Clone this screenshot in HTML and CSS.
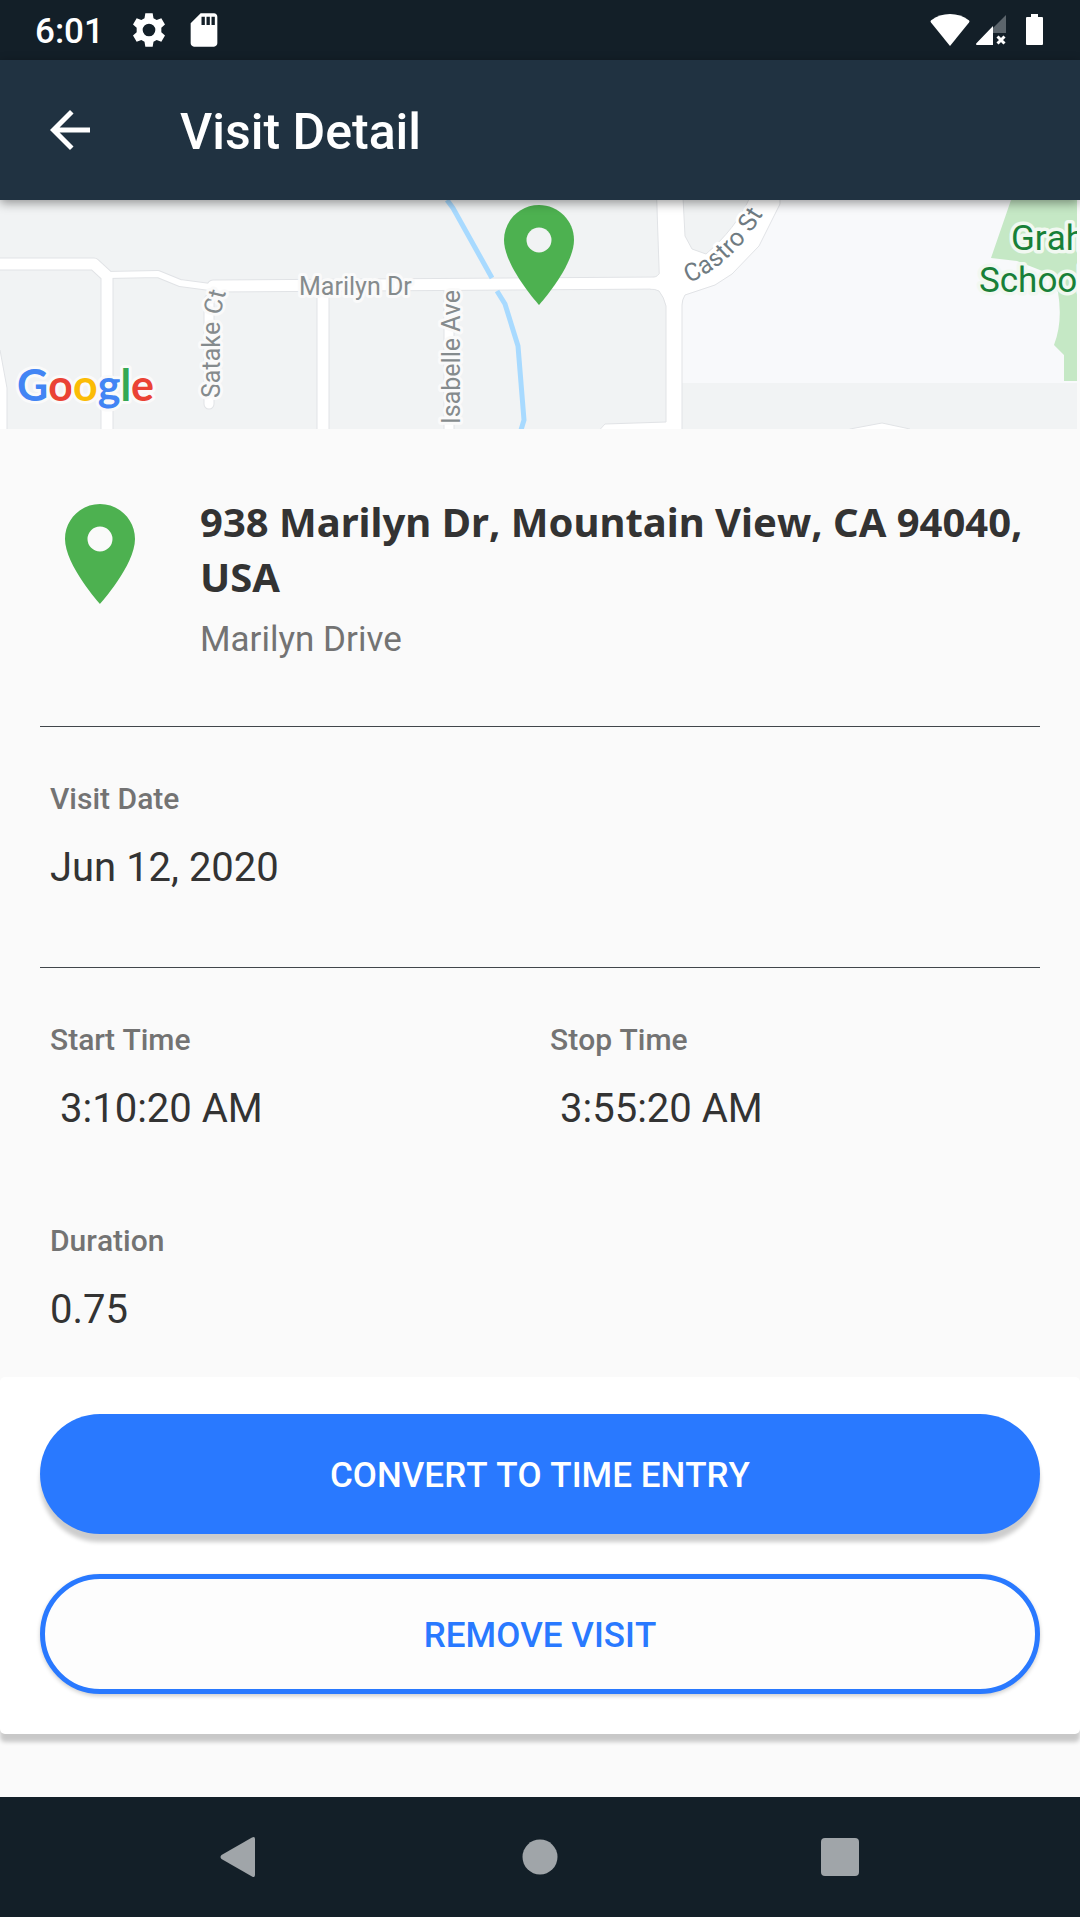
FILE: index.html
```html
<!DOCTYPE html>
<html lang="en">
<head>
    <meta charset="UTF-8">
    <meta name="viewport" content="width=device-width, initial-scale=1.0">
    <title>Visit Detail</title>
    <link rel="stylesheet" href="styles.css">
</head>
<body>
    <div class="status-bar">
        <span class="clock">6:01</span>
        <svg class="status-icon" viewBox="0 0 24 24"><path fill-rule="evenodd" d="M9.8 2h4.4l.5 2.9 1.9 1.1 2.8-1.1 2.2 3.8-2.2 1.9v2.8l2.2 1.9-2.2 3.8-2.8-1.1-1.9 1.1-.5 2.9H9.8l-.5-2.9L7.4 18l-2.8 1.1-2.2-3.8 2.2-1.9v-2.800L2.400 8.700l2.200-3.800L7.400 6l1.900-1.100zM12 8.200a3.800 3.800 0 1 0 0 7.600 3.800 3.800 0 0 0 0-7.600z"/></svg>
        <svg class="status-icon" viewBox="0 0 24 24"><path fill-rule="evenodd" d="M18 2h-8L4 8v12c0 1.100.9 2 2 2h12c1.100 0 2-.9 2-2V4c0-1.100-.9-2-2-2zM10.500 4h2v5h-2zM13.500 4h2v5h-2zM16.500 4h2v5h-2z"/></svg>
        <div class="status-right">
            <svg class="wifi-icon" viewBox="0 0 40 32"><path d="M20 32 1 8.500C.3 7.600.4 7 1.200 6.300 6.500 2.200 13 0 20 0s13.500 2.200 18.800 6.300c.8.7.9 1.300.2 2.200z"/></svg>
            <svg class="signal-icon" viewBox="0 0 30 32"><path class="dim" d="M30 1v18H17V14z"/><path d="M17 12v19H1c-1 0-1.300-1-.6-1.700z"/><path class="cross" d="m21.500 22.500 7 7m0-7-7 7"/></svg>
            <svg class="battery-icon" viewBox="0 0 17 32"><path d="M5 0h7v3h4a1 1 0 0 1 1 1v26a1 1 0 0 1-1 1H1a1 1 0 0 1-1-1V4a1 1 0 0 1 1-1h4z"/></svg>
        </div>
    </div>

    <header class="app-bar">
        <a href="javascript:history.back()" class="back-button" aria-label="Back">
            <svg viewBox="0 0 24 24"><path d="M20 11H7.830l5.590-5.590L12 4l-8 8 8 8 1.410-1.410L7.830 13H20z"/></svg>
        </a>
        <h1>Visit Detail</h1>
    </header>

    <main>
        <svg class="map" viewBox="0 0 1080 229" preserveAspectRatio="xMidYMid slice">
            <rect class="block" width="1080" height="229"/>
            <path class="area" d="M683 0H1078V183H682V90L740 50 780 0z"/>
            <path class="park" d="M1011 0H1078V181H1064V155L1054 145Q1063 122 1058 92L1045 72 1017 61 991 58z"/>

            <!-- roads: grey casing first, white fill on top -->
            <g class="casing">
                <path class="wide" d="M-5 64H94L107 76V235"/>
                <path class="lane" d="M107 75 158 74 180 83 210 87"/>
                <path class="wide" d="M213 86 660 83M323 86V235"/>
                <path class="narrow" d="M222 86 209 100V204M449 90V235"/>
                <path d="M657 -3H683L685 36 692 49 706 54C725 38 741 18 750 -3H780V4L759 46 732 74 715 85 685 95Q682 100 682 105V235H595L605 224 666 222V106Q664 97 659 91 655 89 650 89V78Q656 78 659 74z"/>
                <path d="M850 229 882 223 910 229 910 235H850z"/>
                <path d="M-5 150H0L7 188V235H-5z"/>
            </g>
            <g class="road">
                <path class="wide" d="M-5 64H94L107 76V235"/>
                <path class="lane" d="M107 75 158 74 180 83 210 87"/>
                <path class="wide" d="M213 86 660 83M323 86V235"/>
                <path class="narrow" d="M222 86 209 100V204M449 90V235"/>
            </g>
            <path class="river" d="M447 0 453 8 492 78M497 91 505 104 518 146 524 220 521 230"/>

            <path id="satake" class="guide" d="M220 198V116L228 84"/>
            <path id="castro" class="guide" d="M689 83Q738 62 770 2"/>
            <g class="street-label">
                <text x="299" y="95">Marilyn Dr</text>
                <text><textPath href="#satake">Satake Ct</textPath></text>
                <text transform="translate(460 224) rotate(-90)">Isabelle Ave</text>
                <text class="main-street"><textPath href="#castro">Castro St</textPath></text>
            </g>
            <g class="place-label">
                <text x="1011" y="50">Graham</text>
                <text x="979" y="92">School</text>
            </g>
            <rect class="edge" x="1077" width="3" height="229"/>
            <text class="google" x="17" y="201"><tspan class="g-blue">G</tspan><tspan class="g-red">o</tspan><tspan class="g-yellow">o</tspan><tspan class="g-blue">g</tspan><tspan class="g-green">l</tspan><tspan class="g-red">e</tspan></text>
            <path class="pin" d="M539 5c-19.350 0-35 15.650-35 35 0 26.250 35 65 35 65s35-38.750 35-65c0-19.350-15.650-35-35-35z"/>
            <circle class="pin-hole" cx="539" cy="40" r="12.500"/>
        </svg>

        <section class="place">
            <svg class="pin" viewBox="0 0 24 24"><path d="M12 2C8.130 2 5 5.130 5 9c0 5.250 7 13 7 13s7-7.750 7-13c0-3.870-3.130-7-7-7zm0 9.500a2.500 2.500 0 1 1 0-5 2.500 2.500 0 0 1 0 5z"/></svg>
            <div class="place-info">
                <h2>938 Marilyn Dr, Mountain View, CA 94040, USA</h2>
                <p>Marilyn Drive</p>
            </div>
        </section>

        <dl class="details">
            <div class="detail">
                <dt>Visit Date</dt>
                <dd>Jun 12, 2020</dd>
            </div>
        </dl>

        <dl class="details times">
            <div class="detail">
                <dt>Start Time</dt>
                <dd class="time">3:10:20 AM</dd>
            </div>
            <div class="detail">
                <dt>Stop Time</dt>
                <dd class="time">3:55:20 AM</dd>
            </div>
            <div class="detail">
                <dt>Duration</dt>
                <dd>0.75</dd>
            </div>
        </dl>

        <div class="actions">
            <button type="button" class="btn btn-primary">Convert to time entry</button>
            <button type="button" class="btn btn-outline">Remove visit</button>
        </div>
    </main>

    <nav class="nav-bar">
        <button type="button" aria-label="Back"><svg viewBox="0 0 40 40"><path d="M35 2v36q0 3-3 1.500L1.500 22q-2-2 0-4L32 .5Q35-1 35 2z"/></svg></button>
        <button type="button" aria-label="Home"><svg viewBox="0 0 40 40"><circle cx="20" cy="20" r="17.500"/></svg></button>
        <button type="button" aria-label="Recent apps"><svg viewBox="0 0 40 40"><rect x="1" y="1" width="38" height="38" rx="4"/></svg></button>
    </nav>
</body>
</html>
```

FILE: styles.css
```css
* {
    box-sizing: border-box;
}
body {
    font-family: Roboto, sans-serif;
    font-kerning: none;
    margin: 0;
    min-height: 100vh;
    display: flex;
    flex-direction: column;
    background-color: #fafafa;
    color: #333;
}
h1, h2, p, dl, dd {
    margin: 0;
}
svg {
    display: block;
}

/* status bar */
.status-bar {
    display: flex;
    align-items: center;
    height: 60px;
    padding: 0 37px 0 35px;
    background-color: #131f28;
    color: #fff;
    fill: #fff;
}
.clock {
    margin-right: 25px;
    padding-top: 2px;
    font-size: 35px;
    font-weight: 500;
}
.status-icon {
    width: 40px;
    height: 40px;
    margin-right: 15px;
}
.status-right {
    display: flex;
    gap: 6px;
    margin-left: auto;
}
.wifi-icon {
    width: 40px;
    height: 32px;
}
.signal-icon {
    width: 30px;
    height: 32px;
    margin-right: 14px;
}
.signal-icon .dim {
    fill: #5c656c;
}
.signal-icon .cross {
    stroke: #fff;
    stroke-width: 3;
}
.battery-icon {
    width: 17px;
    height: 32px;
}

/* app bar */
.app-bar {
    display: flex;
    align-items: center;
    gap: 80px;
    height: 140px;
    padding: 0 40px;
    background-color: #203241;
    color: #fff;
    box-shadow: 0 3px 10px rgba(0, 0, 0, 0.4);
    z-index: 1;
}
.back-button svg {
    width: 60px;
    height: 60px;
    fill: #fff;
}
.app-bar h1 {
    padding-top: 4px;
    font-size: 50px;
    font-weight: 500;
    line-height: 60px;
}

/* map */
.map {
    width: 100%;
    height: 229px;
}
.block {
    fill: #f1f3f4;
}
.area {
    fill: #f8f9fb;
}
.park {
    fill: #c5e8c5;
}
.casing path, .road path {
    fill: none;
    stroke-linejoin: round;
    stroke-linecap: round;
}
.casing path {
    fill: #fff;
    stroke: #e1e3e6;
    stroke-width: 1px;
}
.casing .wide, .casing .narrow, .casing .lane {
    fill: none;
}
.casing .wide {
    stroke-width: 13px;
}
.casing .narrow {
    stroke-width: 11px;
}
.casing .lane {
    stroke-width: 8px;
}
.road path {
    stroke: #fff;
}
.road .wide {
    stroke-width: 11px;
}
.road .narrow {
    stroke-width: 9px;
}
.road .lane {
    stroke-width: 6px;
}
.river {
    fill: none;
    stroke: #a8daff;
    stroke-width: 5px;
}
.guide {
    fill: none;
}
.street-label text {
    font-size: 25px;
    fill: #858b8d;
    stroke: #fafafa;
    stroke-width: 6px;
    stroke-linejoin: round;
    paint-order: stroke;
}
.street-label .main-street {
    fill: #6f7b82;
    stroke: #fff;
}
.place-label text {
    font-size: 35px;
    fill: #188038;
    stroke: #f1f8f1;
    stroke-width: 7px;
    stroke-linejoin: round;
    paint-order: stroke;
}
.edge {
    fill: #fafafa;
}
.google {
    font-family: Lato, sans-serif;
    font-size: 43px;
    font-weight: 700;
    stroke: #fafafa;
    stroke-width: 6px;
    stroke-linejoin: round;
    paint-order: stroke;
}
.g-blue {
    fill: #4285f4;
}
.g-red {
    fill: #ea4335;
}
.g-yellow {
    fill: #fbbc05;
}
.g-green {
    fill: #34a853;
}
.pin {
    fill: #4db150;
}
.pin-hole {
    fill: #f1f3f4;
}

/* address */
.place {
    display: flex;
    gap: 40px;
    padding: 65px 40px 66px;
}
.place .pin {
    flex: none;
    width: 120px;
    height: 120px;
}
.place h2 {
    font-family: "Noto Sans", sans-serif;
    font-size: 40px;
    font-weight: 700;
    line-height: 55px;
}
.place p {
    margin-top: 15px;
    font-size: 35px;
    line-height: 41px;
    color: #737373;
}

/* visit details */
.details {
    margin: 0 40px;
    padding: 54px 0 76px;
    border-top: 1px solid #41464b;
}
.times {
    display: grid;
    grid-template-columns: 1fr 1fr;
    row-gap: 91px;
    padding-bottom: 44px;
}
.detail {
    padding: 0 10px;
}
.detail dt {
    margin-bottom: 28px;
    font-size: 30px;
    font-weight: 500;
    line-height: 35px;
    color: #737373;
}
.detail dd {
    font-size: 40px;
    line-height: 47px;
}
.detail .time {
    padding-left: 10px;
}

/* buttons */
.actions {
    display: flex;
    flex-direction: column;
    gap: 40px;
    padding: 37px 40px 40px;
    background-color: #fff;
    border-radius: 5px;
    box-shadow: 0 8px 4px rgba(0, 0, 0, 0.2);
}
.btn {
    height: 120px;
    padding: 2px 0 0;
    border: none;
    border-radius: 60px;
    font-family: inherit;
    font-kerning: inherit;
    font-size: 35px;
    font-weight: 500;
    text-transform: uppercase;
    cursor: pointer;
}
.btn-primary {
    background-color: #2979ff;
    color: #fff;
    box-shadow: 0 8px 4px rgba(0, 0, 0, 0.2);
}
.btn-outline {
    background-color: #fdfdfd;
    border: 5px solid #2979ff;
    color: #2979ff;
    box-shadow: 0 2px 4px rgba(0, 0, 0, 0.2);
}

/* system navigation */
.nav-bar {
    display: grid;
    grid-template-columns: repeat(3, 1fr);
    height: 120px;
    margin-top: auto;
    padding: 0 90px;
    background-color: #131f28;
}
.nav-bar button {
    display: flex;
    align-items: center;
    justify-content: center;
    padding: 0;
    background: none;
    border: none;
    cursor: pointer;
}
.nav-bar svg {
    width: 40px;
    height: 40px;
    fill: #a0a5a9;
}
```
